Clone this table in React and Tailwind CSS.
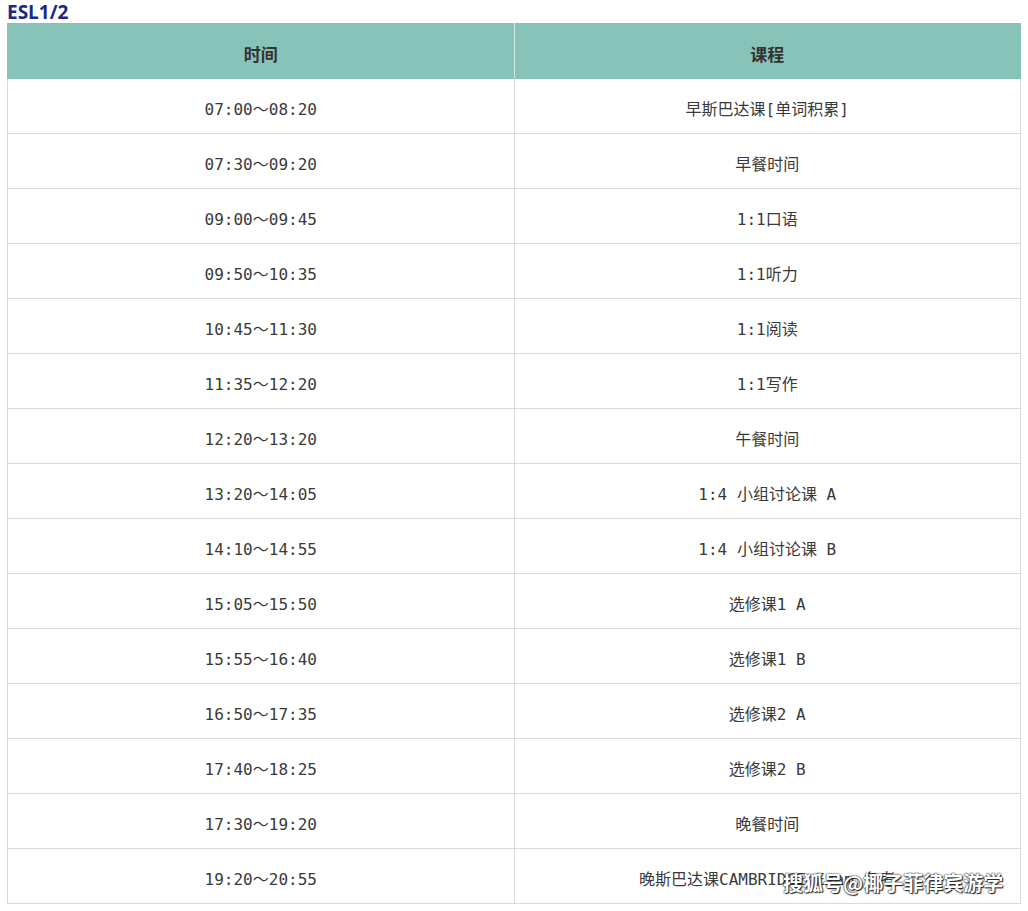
const rows = [
  ["07:00～08:20", "早斯巴达课[单词积累]"],
  ["07:30～09:20", "早餐时间"],
  ["09:00～09:45", "1:1口语"],
  ["09:50～10:35", "1:1听力"],
  ["10:45～11:30", "1:1阅读"],
  ["11:35～12:20", "1:1写作"],
  ["12:20～13:20", "午餐时间"],
  ["13:20～14:05", "1:4 小组讨论课 A"],
  ["14:10～14:55", "1:4 小组讨论课 B"],
  ["15:05～15:50", "选修课1 A"],
  ["15:55～16:40", "选修课1 B"],
  ["16:50～17:35", "选修课2 A"],
  ["17:40～18:25", "选修课2 B"],
  ["17:30～19:20", "晚餐时间"],
  ["19:20～20:55", "晚斯巴达课CAMBRIDGE Exam 备考"],
];

const cellFont = "font-['DejaVu_Sans_Mono','Noto_Sans_CJK_SC',monospace]";

export default function App() {
  return (
    <div className="relative w-[1028px] h-[911px] bg-white px-[7px] overflow-hidden">
      <h1 className="h-[23px] pt-[1px] text-[19px] leading-[22px] font-bold text-[#1b2a84] font-['Open_Sans','Liberation_Sans',sans-serif]">
        ESL1/2
      </h1>

      <table className="w-[1014px] table-fixed border-collapse">
        <thead>
          <tr className="h-[55px] bg-[#87c3b8]">
            <th className="pt-[6px] border border-[#87c3b8] border-r-[#d6e9e4] text-[17px] font-bold text-[#333] font-['Noto_Sans_CJK_SC',sans-serif]">
              时间
            </th>
            <th className="pt-[6px] border border-[#87c3b8] text-[17px] font-bold text-[#333] font-['Noto_Sans_CJK_SC',sans-serif]">
              课程
            </th>
          </tr>
        </thead>
        <tbody>
          {rows.map((r, i) => (
            <tr key={i} className="h-[55px]">
              <td
                className={`pt-[7px] border border-[#dadada] text-center text-[16px] text-[#3a3a3a] ${cellFont}`}
              >
                {r[0]}
              </td>
              <td
                className={`pt-[7px] border border-[#dadada] text-center text-[16px] text-[#3a3a3a] ${cellFont}`}
              >
                {r[1]}
              </td>
            </tr>
          ))}
        </tbody>
      </table>

      {/* watermark */}
      <div className="absolute left-[783px] top-[868px] whitespace-nowrap text-[20px] leading-[30px] font-bold text-white font-['Noto_Sans_CJK_SC',sans-serif] [text-shadow:0_0_2px_#222,0_0_1px_#222,1px_1px_1px_#222]">
        搜狐号@椰子菲律宾游学
      </div>
    </div>
  );
}
